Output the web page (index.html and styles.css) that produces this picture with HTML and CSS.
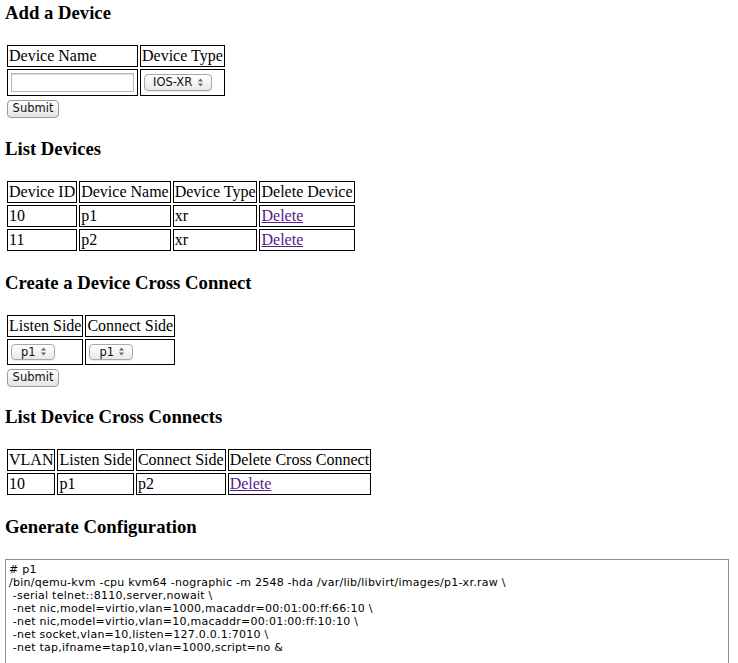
FILE: index.html
```html
<!DOCTYPE html>
<html>
<head>
<meta charset="utf-8">
<title>Devices</title>
<link rel="stylesheet" href="styles.css">
</head>
<body>
<h3 class="first">Add a Device</h3>
<form class="form">
<table class="grid">
<tr><td>Device Name</td><td>Device Type</td></tr>
<tr><td><input class="text-input" type="text"></td><td><select class="sel sel-wide"><option>IOS-XR</option></select></td></tr>
</table>
<button class="btn" type="button">Submit</button>
</form>

<h3>List Devices</h3>
<table class="grid">
<tr><td>Device ID</td><td>Device Name</td><td>Device Type</td><td>Delete Device</td></tr>
<tr><td>10</td><td>p1</td><td>xr</td><td><a class="link" href="#">Delete</a></td></tr>
<tr><td>11</td><td>p2</td><td>xr</td><td><a class="link" href="#">Delete</a></td></tr>
</table>

<h3>Create a Device Cross Connect</h3>
<form class="form form-xc">
<table class="grid">
<tr><td>Listen Side</td><td>Connect Side</td></tr>
<tr><td><select class="sel sel-small"><option>p1</option></select></td><td><select class="sel sel-small"><option>p1</option></select></td></tr>
</table>
<button class="btn" type="button">Submit</button>
</form>

<h3>List Device Cross Connects</h3>
<table class="grid">
<tr><td>VLAN</td><td>Listen Side</td><td>Connect Side</td><td>Delete Cross Connect</td></tr>
<tr><td>10</td><td>p1</td><td>p2</td><td><a class="link" href="#">Delete</a></td></tr>
</table>

<h3 class="last">Generate Configuration</h3>
<textarea class="config"># p1
/bin/qemu-kvm -cpu kvm64 -nographic -m 2548 -hda /var/lib/libvirt/images/p1-xr.raw \
 -serial telnet::8110,server,nowait \
 -net nic,model=virtio,vlan=1000,macaddr=00:01:00:ff:66:10 \
 -net nic,model=virtio,vlan=10,macaddr=00:01:00:ff:10:10 \
 -net socket,vlan=10,listen=127.0.0.1:7010 \
 -net tap,ifname=tap10,vlan=1000,script=no &amp;
</textarea>
</body>
</html>
```

FILE: styles.css
```css
html, body {
  background: #fff;
}
body {
  margin: 0 5px;
  font-family: "Liberation Serif", "Times New Roman", serif;
  font-size: 16px;
  color: #000;
}
h3 {
  font-size: 18.72px;
  font-weight: bold;
  margin: 18.72px 0;
}
h3.first {
  margin-top: 2px;
}
h3.last {
  margin-bottom: 21.72px;
}
.form {
  margin: 0;
  padding-bottom: 2px;
}
.form-xc {
  padding-bottom: 1px;
}
.grid {
  border-collapse: separate;
  border-spacing: 2px;
  margin-left: 0;
}
.grid td {
  border: 1px solid #000;
  padding: 1px;
  line-height: 18px;
  vertical-align: middle;
}
.text-input {
  display: block;
  width: 123px;
  height: 19px;
  box-sizing: border-box;
  margin: 2px;
  border: 1px solid #b8b8b8;
  box-shadow: inset 0 1px 1px #d8d8d8;
  background: #fff;
  padding: 0 2px;
}
.sel {
  -webkit-appearance: none;
  appearance: none;
  display: block;
  box-sizing: border-box;
  height: 17px;
  margin: 2px;
  padding: 0 0 0 8px;
  border: 1px solid #a8a8a8;
  border-radius: 4px;
  font-family: "DejaVu Sans", "Liberation Sans", sans-serif;
  font-size: 11.5px;
  line-height: 15px;
  color: #111;
  background-color: #f4f4f4;
  background-image: url("data:image/svg+xml,%3Csvg xmlns='http://www.w3.org/2000/svg' width='7' height='11'%3E%3Cpath d='M3.5 1.5 L6 4.5 H1 Z M3.5 9.5 L6 6.5 H1 Z' fill='%23666'/%3E%3C/svg%3E"), linear-gradient(#ffffff, #e9e9e9);
  background-repeat: no-repeat, no-repeat;
  background-position: right 7px center, 0 0;
  box-shadow: 0 1px 0 rgba(0,0,0,0.08);
}
.sel-wide {
  width: 68px;
}
.sel-small {
  width: 44px;
  height: 16px;
  margin: 3px 2px;
  padding-left: 9px;
}
.btn {
  display: block;
  box-sizing: border-box;
  width: 52px;
  height: 18px;
  margin: 2px 2px 0 2px;
  padding: 0;
  border: 1px solid #9a9a9a;
  border-radius: 4px;
  background: linear-gradient(#ffffff, #e4e4e4);
  font-family: "DejaVu Sans", "Liberation Sans", sans-serif;
  font-size: 11.5px;
  line-height: 15px;
  color: #111;
}
.link {
  color: #551a8b;
  text-decoration: underline;
}
.config {
  display: block;
  box-sizing: border-box;
  width: 724px;
  height: 200px;
  margin: 0;
  padding: 3px 3px;
  border: 1px solid #8c8c8c;
  font-family: "DejaVu Sans", "Liberation Sans", sans-serif;
  font-size: 11px;
  letter-spacing: 0.25px;
  line-height: 13px;
  color: #000;
  resize: none;
  overflow: hidden;
  white-space: pre;
}
```
